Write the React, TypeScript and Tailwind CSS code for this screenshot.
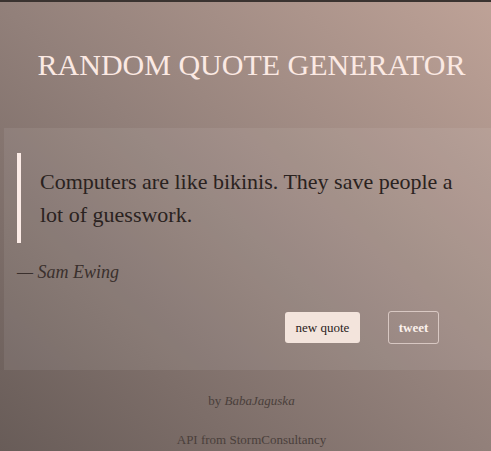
export default function App() {
  return (
    <div className="w-full h-[451px] overflow-hidden bg-[linear-gradient(to_top_right,#685c58,#92807a_50%,#bea297)] border-t-2 border-[#3a3330]" style={{ fontFamily: '"Liberation Serif", "Times New Roman", serif' }}>
      <div className="w-[503px]">
        <h1 className="pt-[43px] pb-[43px] text-center text-[30px] leading-[40px] text-[#fbe9e3]">RANDOM QUOTE GENERATOR</h1>
        <div className="ml-[4px] w-[495px] h-[242px] bg-[rgba(255,255,255,0.07)] pt-[25px] pl-[13px]">
          <div className="border-l-4 border-[#fcece7] pl-[19px] py-[12px] text-[22px] leading-[33px] text-[#2a2220] w-[450px]">
            Computers are like bikinis. They save people a lot of guesswork.
          </div>
          <div className="mt-[17px] text-[18px] leading-[24px] italic text-[#3a302d]">— Sam Ewing</div>
          <div className="mt-[27px] flex pl-[268px] gap-[28px] items-center">
            <button className="h-[31px] w-[75px] rounded-[3px] bg-[#f3e4dc] text-[13px] text-[#2a2220]">new quote</button>
            <button className="h-[33px] w-[51px] rounded-[3px] border border-[rgba(255,240,235,0.6)] text-[13px] font-bold text-[#fbf1ec]">tweet</button>
          </div>
        </div>
        <div className="text-center text-[13px] text-[#4a3f3b] mt-[21px]">by <i>BabaJaguska</i></div>
        <div className="text-center text-[13px] text-[#4a3f3b] mt-[19px]">API from StormConsultancy</div>
      </div>
    </div>
  );
}
